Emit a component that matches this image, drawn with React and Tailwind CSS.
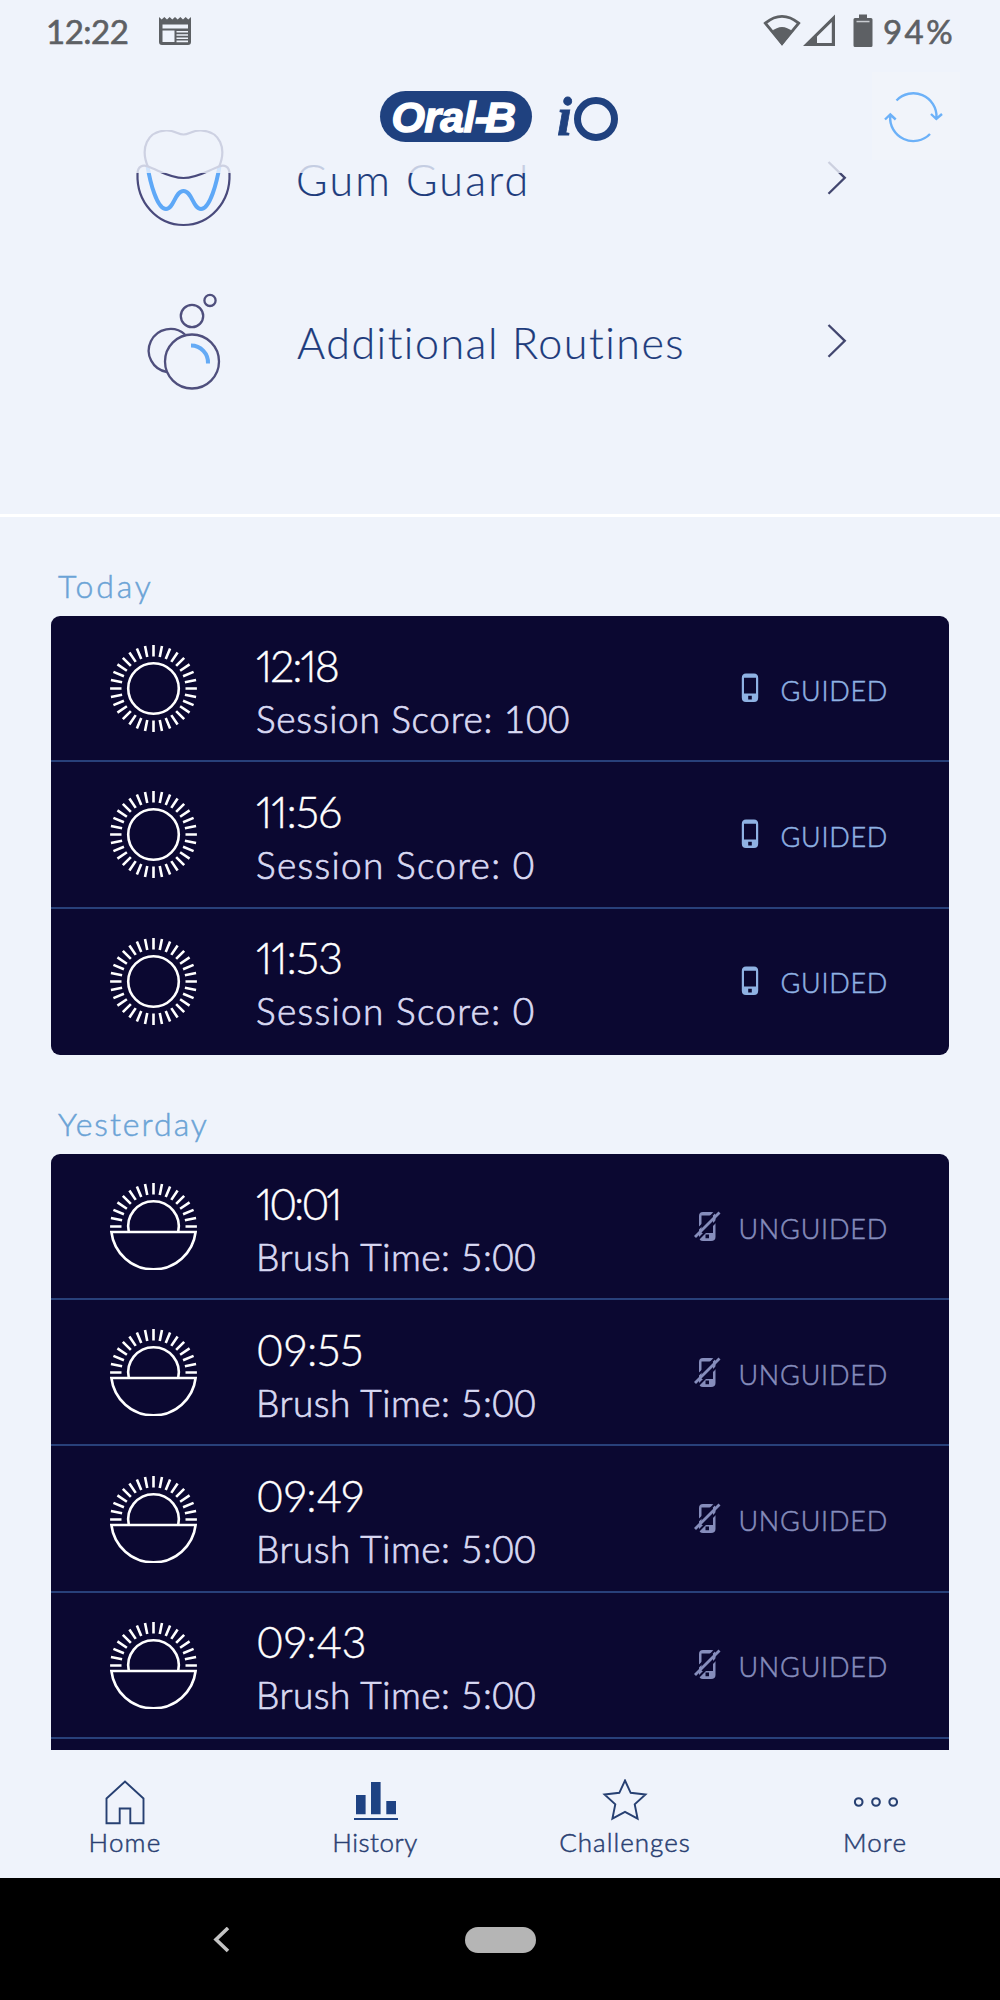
const TODAY = [
  { time: "12:18", detail: "Session Score: 100", tracking: "tracking-[-2px]", detailTracking: "tracking-[0.7px]" },
  { time: "11:56", detail: "Session Score: 0", tracking: "tracking-[-0.9px]", detailTracking: "tracking-[1.3px]" },
  { time: "11:53", detail: "Session Score: 0", tracking: "tracking-[-0.9px]", detailTracking: "tracking-[1.3px]" },
];

const YESTERDAY = [
  { time: "10:01", detail: "Brush Time: 5:00", tracking: "tracking-[-3px]", detailTracking: "tracking-[0.5px]" },
  { time: "09:55", detail: "Brush Time: 5:00", tracking: "tracking-normal", detailTracking: "tracking-[0.5px]" },
  { time: "09:49", detail: "Brush Time: 5:00", tracking: "tracking-[-0.3px]", detailTracking: "tracking-[0.5px]" },
  { time: "09:43", detail: "Brush Time: 5:00", tracking: "tracking-[-0.3px]", detailTracking: "tracking-[0.5px]" },
];

const TABS = [
  { label: "Home", icon: HomeIcon, tracking: "tracking-[1.2px]" },
  { label: "History", icon: HistoryIcon, tracking: "tracking-[0.5px]" },
  { label: "Challenges", icon: StarIcon, tracking: "tracking-[1px]" },
  { label: "More", icon: MoreIcon, tracking: "tracking-[1.1px]" },
];

const rays = (from, to) =>
  Array.from({ length: to - from + 1 }, (_, i) => {
    const a = ((from + i) * 11.25 * Math.PI) / 180;
    const [x, y] = [Math.sin(a), -Math.cos(a)];
    return `M${43.5 + x * 32} ${43.5 + y * 32}L${43.5 + x * 43.4} ${43.5 + y * 43.4}`;
  }).join("");

function SunIcon() {
  return (
    <svg className="mt-px h-[87px] w-[87px] shrink-0" viewBox="0 0 87 87" fill="none" stroke="#fff" strokeWidth="2.6">
      <circle cx="43.5" cy="43.5" r="25.3" />
      <path d={rays(0, 31)} />
    </svg>
  );
}

function SunriseIcon() {
  return (
    <svg className="mt-px h-[87px] w-[87px] shrink-0" viewBox="0 0 87 87" fill="none" stroke="#fff" strokeWidth="2.6">
      <path d={rays(-8, 8)} />
      <path d="M18.8 49A25.3 25.3 0 1 1 68.2 49" />
      <path d="M1.4 49H85.6A42.4 42.4 0 0 1 1.4 49Z" />
    </svg>
  );
}

function PhoneIcon() {
  return (
    <svg className="h-[30px] w-[18px]" viewBox="0 0 18 30" fill="none">
      <path
        fill="#8fb2e3"
        fillRule="evenodd"
        d="M5 .5H13Q17.2 .5 17.2 5V24.5Q17.2 29 13 29H5Q.8 29 .8 24.5V5Q.8 .5 5 .5ZM3 4.8V20.5H15V4.8ZM7.2 22.8V26.6H10.8V22.8Z"
      />
    </svg>
  );
}

function PhoneOffIcon() {
  return (
    <svg className="h-[31px] w-[27px]" viewBox="0 0 27 31" fill="none">
      <path
        fill="#868dbc"
        fillRule="evenodd"
        d="M9 1H17Q21.5 1 21.5 5V26Q21.5 30 17 30H9Q5 30 5 26V5Q5 1 9 1ZM7.5 4.5V22H19V4.5ZM11.5 23.5V27.3H15V23.5Z"
      />
      <path stroke="#0b0831" strokeWidth="2" d="M-1.5 23.5L23-1M3.5 29L28 4.5" />
      <path stroke="#868dbc" strokeWidth="2.8" d="M1 26L25.5 1.5" />
    </svg>
  );
}

function ToothIcon() {
  return (
    <svg className="h-[98px] w-[97px]" viewBox="0 0 97 98" fill="none" strokeWidth="2.2">
      <path stroke="#494a7c" d="M13 37C5 18 12 1.5 31 .5C39 0 43 4.5 48.5 4.5C54 4.5 58 0 66 .5C85 1.5 92 18 84 37" />
      <path stroke="#5ea8f7" strokeWidth="4" d="M12.5 36C15 52 22 79 31 79C39 79 40 61 48.5 61C57 61 58 79 66 79C75 79 82 52 84.5 36" />
      <path stroke="#494a7c" d="M2.5 44C2.5 36 8 34.5 13 36.5C25 41 35 48 48.5 48C62 48 72 41 84 36.5C89 34.5 94.5 36 94.5 44C95.5 72 75 95 48.5 95C22 95 1.5 72 2.5 44Z" />
    </svg>
  );
}

function BubblesIcon() {
  return (
    <svg className="h-[98px] w-[97px]" viewBox="0 0 97 98" fill="none" stroke="#4f4f7d" strokeWidth="2.3">
      <circle cx="75" cy="7.4" r="5.6" />
      <circle cx="57" cy="23" r="11.2" />
      <path d="M50 41.5A21.7 21.7 0 1 0 32 79" />
      <circle cx="57" cy="68.5" r="27" />
      <path stroke="#64aaf5" strokeWidth="4" d="M56 52.5A17 17 0 0 1 73 70.5" />
    </svg>
  );
}

function Chevron() {
  return (
    <svg className="mb-[2px] h-[36px] w-[20px]" viewBox="0 0 20 36" fill="none" stroke="#42466f" strokeWidth="2.3">
      <path d="M1.5 2L17.8 17.8L1.5 33.8" />
    </svg>
  );
}

function HomeIcon() {
  return (
    <svg className="h-[46px] w-[46px]" viewBox="0 0 46 46" fill="none" stroke="#274072" strokeWidth="1.9">
      <path d="M4.5 19.5L23 2.5L41.5 19.5V44.3H28.3V29.5H17.7V44.3H4.5Z" />
    </svg>
  );
}

function HistoryIcon() {
  return (
    <svg className="h-[46px] w-[46px]" viewBox="0 0 46 46" fill="#1e4283">
      <path d="M4 16H13.6V35.3H4ZM19 3H28.6V35.3H19ZM34.3 22H44V35.3H34.3ZM2 39H46V41H2Z" />
    </svg>
  );
}

function StarIcon() {
  return (
    <svg className="h-[46px] w-[46px]" viewBox="0 0 46 46" fill="none" stroke="#274072" strokeWidth="1.9">
      <path d="M23 1.5L28.7 13.8L43.5 15.5L32.7 25.3L35.6 39.7L23 32.8L10.4 39.7L13.3 25.3L2.5 15.5L17.3 13.8Z" />
    </svg>
  );
}

function MoreIcon() {
  return (
    <svg className="h-[46px] w-[46px]" viewBox="0 0 46 46" fill="none" stroke="#274072" strokeWidth="2.1">
      <circle cx="6.7" cy="23" r="3.8" />
      <circle cx="24" cy="23" r="3.8" />
      <circle cx="41.2" cy="23" r="3.8" />
    </svg>
  );
}

function StatusBar() {
  return (
    <div className="flex h-[60px] items-start pt-[15px] pr-[45px] pl-[46px] text-[33px] leading-none text-[#5d6064] [-webkit-text-stroke:0.6px]">
      <span className="tracking-[-0.5px]">12:22</span>
      <svg className="mt-px ml-[31px] h-[30px] w-[32px]" viewBox="0 0 32 30" fill="none">
        <path
          fill="#5d6064"
          fillRule="evenodd"
          d="M0 1L2.7 3.5L5.3 1L8 3.5L10.7 1L13.3 3.5L16 1L18.7 3.5L21.3 1L24 3.5L26.7 1L29.3 3.5L32 1V26Q32 29 29 29H3Q0 29 0 26ZM3.5 8.5V12.5H29V8.5ZM3.5 14.5V26H15.5V14.5ZM17.5 15V16.6H29V15ZM17.5 18.2V19.8H29V18.2ZM17.5 21.4V23H29V21.4ZM17.5 24.6V26.2H29V24.6Z"
        />
      </svg>
      <svg className="-mt-px ml-auto h-[34px] w-[38px]" viewBox="0 0 38 34" fill="none">
        <path stroke="#5d6064" strokeWidth="2.8" d="M2.3 9.2Q19-4.5 35.7 9.2L19 29.5Z" />
        <path fill="#5d6064" d="M8.5 17.5Q19 8.5 29.5 17.5L19 31.5Z" />
      </svg>
      <svg className="-mt-px ml-[2px] h-[34px] w-[33px]" viewBox="0 0 33 34" fill="none">
        <path fill="#5d6064" fillRule="evenodd" d="M0 32L32 .5V32ZM14 29H28.8V8L14 22.5Z" />
      </svg>
      <svg className="-mt-px ml-[17px] h-[34px] w-[20px]" viewBox="0 0 20 34">
        <path fill="#5d6064" d="M6 .5H14V4H18Q19.5 4 19.5 5.5V31.5Q19.5 33 18 33H2Q.5 33 .5 31.5V5.5Q.5 4 2 4H6Z" />
        <path fill="#c9ccd1" d="M3.5 6.8H16.5V8.3H3.5Z" />
      </svg>
      <span className="ml-[10px] tracking-[2.4px]">94%</span>
    </div>
  );
}

function Header() {
  return (
    <header className="absolute inset-x-0 top-0 h-[173px] bg-[#eff3fb]/80">
      <StatusBar />
      <div className="flex items-start justify-end">
        <div className="mt-[31px] flex h-[51px] w-[152px] items-center justify-center rounded-full bg-[#1f417f] pt-[2px] pr-[5px] font-['Liberation_Sans'] text-[43px] leading-none font-bold tracking-[-0.7px] text-white italic">
          <span className="[-webkit-text-stroke:1.4px_white]">
            Oral<span className="tracking-[-4px]">-</span>B
          </span>
        </div>
        <div className="mt-[31px] ml-[25px] flex items-start text-[#1f417f]">
          <span className="w-[17px] font-['Liberation_Serif'] text-[54px] leading-[52px] font-bold italic [-webkit-text-stroke:0.8px]">
            i
          </span>
          <span className="mt-[6px] h-[44px] w-[44px] rounded-full border-[7px] border-[#1f417f]" />
        </div>
        <div className="mt-[12px] mr-[40px] ml-[254px] h-[88px] w-[88px] bg-[#f1f4fa]">
          <svg className="h-[88px] w-[88px]" viewBox="0 0 88 88" fill="none" stroke="#6cb1f8" strokeWidth="2.4">
            <path d="M24.5 28.5A23.2 23.2 0 0 1 64.5 45.5M59 42L64.3 47L70 42" />
            <path d="M58 62A23.2 23.2 0 0 1 18.2 44M13 47.5L18.3 42.5L23.7 47.5" />
          </svg>
        </div>
      </div>
    </header>
  );
}

function Section({ title, tracking, sessions, guided }) {
  return (
    <section className="px-[51px]">
      <h2
        className={`mb-[14px] pt-[53px] pl-[7px] text-[32px] leading-none font-light text-[#6ba3d6] [-webkit-text-stroke:0.5px] ${tracking}`}
      >
        {title}
      </h2>
      <div className="overflow-hidden rounded-[9px] bg-[#0b0831]">
        {sessions.map((s) => (
          <div
            key={s.time}
            className="flex h-[146.3px] items-center border-b-2 border-[#28407a] pr-[61px] pl-[59px] font-light last:border-b-transparent"
          >
            {guided ? <SunIcon /> : <SunriseIcon />}
            <div className="ml-[59px] pt-[4px]">
              <div
                className={`text-[43px] leading-none text-white proportional-nums [-webkit-text-stroke:0.4px] ${s.tracking}`}
              >
                {s.time}
              </div>
              <div
                className={`mt-[13px] text-[37px] leading-none text-[#d9d9f2] [-webkit-text-stroke:0.7px] ${s.detailTracking}`}
              >
                {s.detail}
              </div>
            </div>
            <div
              className={`ml-auto flex items-center text-[27px] leading-none ${
                guided ? "gap-[22px] tracking-[0.7px] text-[#8fb2e3]" : "gap-[17px] tracking-[0.8px] text-[#868dbc]"
              }`}
            >
              {guided ? <PhoneIcon /> : <PhoneOffIcon />}
              <span className="pt-[4px] [-webkit-text-stroke:0.5px]">{guided ? "GUIDED" : "UNGUIDED"}</span>
            </div>
          </div>
        ))}
      </div>
    </section>
  );
}

export default function App() {
  return (
    <div className="relative h-[2000px] w-[1000px] overflow-hidden bg-[#eff3fb] font-['Lato',sans-serif]">
      <main className="h-[1750px] overflow-hidden">
        <div className="h-[517px] border-b-[3px] border-white pt-[97px] text-[43px] leading-none font-light text-[#1d3b7c] [-webkit-text-stroke:0.2px]">
          <div className="flex h-[163px] items-center pr-[153px] pl-[135px]">
            <ToothIcon />
            <span className="ml-[64px] pt-[2px] tracking-[2.2px]">Gum Guard</span>
            <span className="ml-auto">
              <Chevron />
            </span>
          </div>
          <div className="flex h-[163px] items-center pr-[153px] pl-[135px]">
            <BubblesIcon />
            <span className="ml-[65px] pt-[2px] tracking-[1.5px]">Additional Routines</span>
            <span className="ml-auto">
              <Chevron />
            </span>
          </div>
        </div>
        <Section title="Today" tracking="tracking-[2.9px]" sessions={TODAY} guided />
        <Section title="Yesterday" tracking="tracking-[2px]" sessions={YESTERDAY} />
        <div className="mx-[51px] -mt-[9px] h-[40px] bg-[#0b0831] pt-[7px]">
          <div className="h-[2px] bg-[#28407a]" />
        </div>
      </main>

      <Header />

      <nav className="grid h-[128px] grid-cols-4 pt-[29px] text-[26px] leading-none font-light text-[#2a3f72]">
        {TABS.map(({ label, icon: Icon, tracking }) => (
          <div key={label} className="flex flex-col items-center gap-[4px]">
            <Icon />
            <span className={`[-webkit-text-stroke:0.5px] ${tracking}`}>{label}</span>
          </div>
        ))}
      </nav>

      <div className="flex h-[122px] bg-black pt-[49px] pl-[212px]">
        <svg className="h-[26px] w-[18px]" viewBox="0 0 18 26" fill="none" stroke="#c4c4c4" strokeWidth="3.6">
          <path d="M16 1L4 12.5L16 24" />
        </svg>
        <div className="ml-[235px] h-[26px] w-[71px] rounded-full bg-[#b5b5b5]" />
      </div>
    </div>
  );
}
